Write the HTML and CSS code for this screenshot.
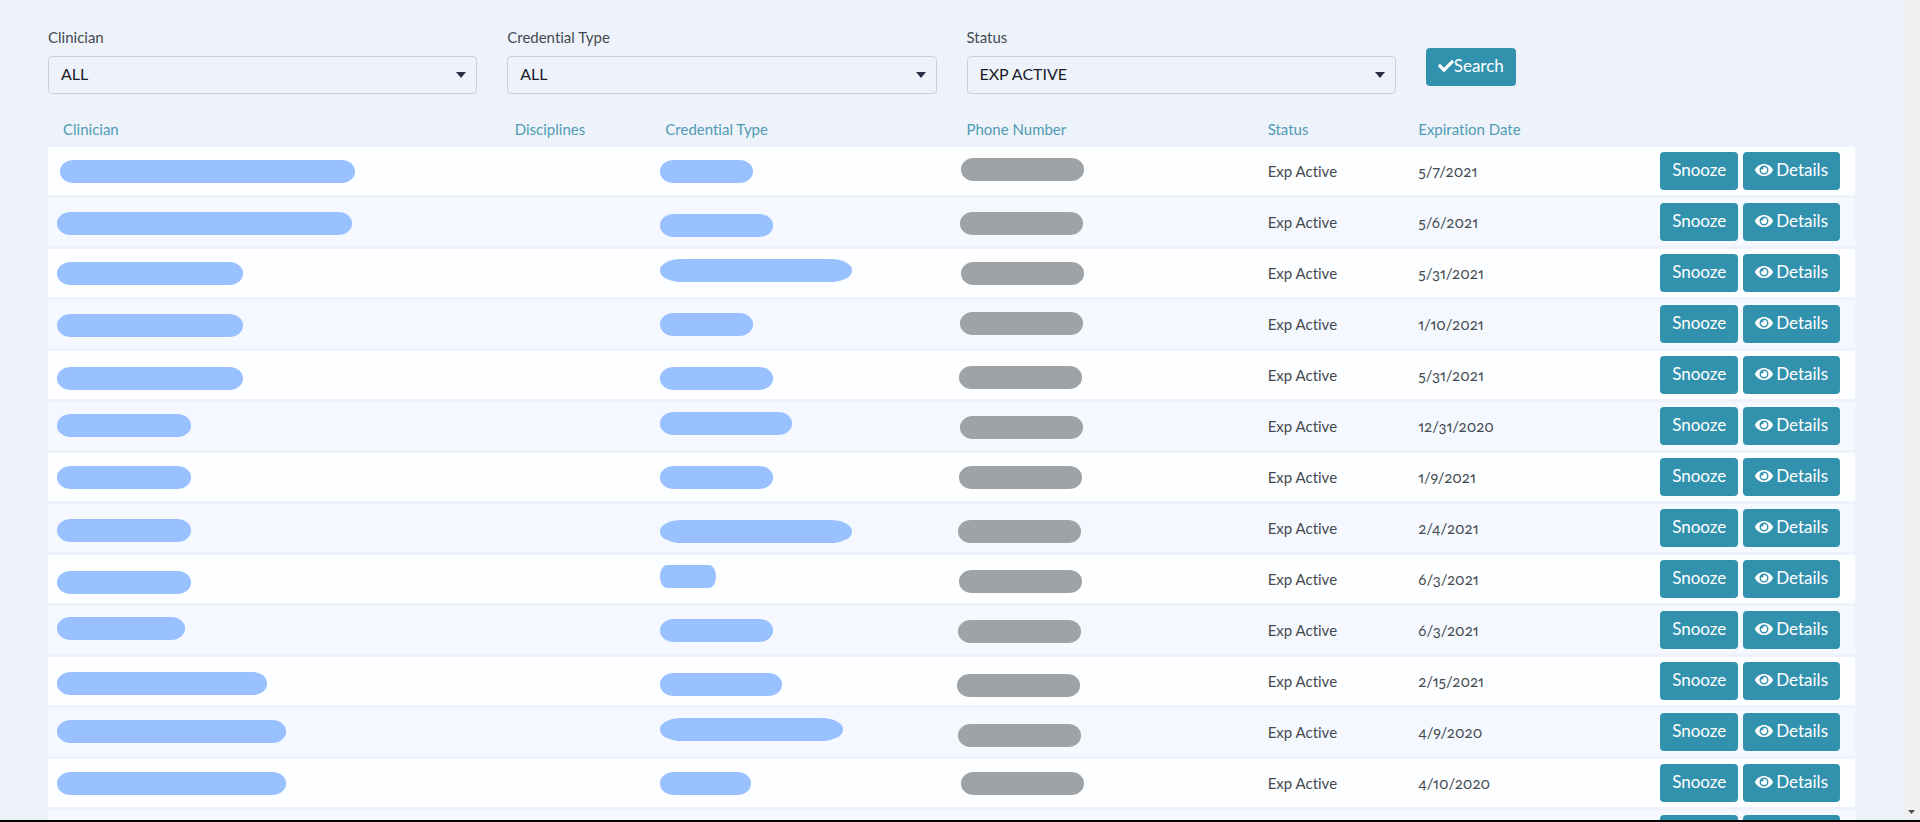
FILE: index.html
```html
<!DOCTYPE html>
<html lang="en">
<head>
<meta charset="utf-8">
<title>Credential Expirations</title>
<link rel="stylesheet" href="styles.css">
</head>
<body>
<svg width="0" height="0" class="sprite" aria-hidden="true">
  <symbol id="eye" viewBox="0 0 576 512"><path fill="currentColor" d="M572.52 241.4C518.29 135.59 410.93 64 288 64S57.68 135.64 3.48 241.41a32.35 32.35 0 0 0 0 29.19C57.71 376.41 165.07 448 288 448s230.32-71.64 284.52-177.41a32.35 32.35 0 0 0 0-29.19zM288 400a144 144 0 1 1 144-144 143.93 143.93 0 0 1-144 144zm0-240a95.31 95.31 0 0 0-25.31 3.79 47.85 47.85 0 0 1-66.9 66.9A95.78 95.78 0 1 0 288 160z"/></symbol>
  <symbol id="check" viewBox="0 0 512 512"><path fill="currentColor" d="M173.898 439.404l-166.4-166.4c-9.997-9.997-9.997-26.206 0-36.204l36.203-36.204c9.997-9.998 26.207-9.998 36.204 0L192 312.69 432.095 72.596c9.997-9.997 26.207-9.997 36.204 0l36.203 36.204c9.997 9.997 9.997 26.206 0 36.204l-294.4 294.401c-9.998 9.997-26.207 9.997-36.204-.001z"/></symbol>
</svg>
<div class="viewport">
  <main class="page">
    <form class="filters" onsubmit="return false">
      <div class="field">
        <label for="clinician">Clinician</label>
        <div class="select"><select id="clinician"><option>ALL</option></select></div>
      </div>
      <div class="field">
        <label for="type">Credential Type</label>
        <div class="select"><select id="type"><option>ALL</option></select></div>
      </div>
      <div class="field">
        <label for="status">Status</label>
        <div class="select"><select id="status"><option>EXP ACTIVE</option></select></div>
      </div>
      <div class="action"><button class="btn" type="submit"><svg class="check" aria-hidden="true"><use href="#check"/></svg>Search</button></div>
    </form>
    <table class="results">
      <colgroup><col class="c3"><col class="c1"><col class="c2"><col class="c2"><col class="c1"><col class="c1"><col class="c2"></colgroup>
      <thead><tr><th>Clinician</th><th>Disciplines</th><th>Credential Type</th><th>Phone Number</th><th>Status</th><th>Expiration Date</th><th></th></tr></thead>
      <tbody id="rows"></tbody>
    </table>
  </main>
  <div class="scrollbar" aria-hidden="true"><svg width="17" height="17"><path d="M5 7h7L8.500 11z" fill="#505050"/></svg></div>
</div>
<script src="rows.js"></script>
</body>
</html>
```
FILE: rows.js
```js
// date, then [x, y, width] of the mask in the clinician, credential and phone cells
const records = [
  ["5/7/2021",   [12, 13, 295], [10, 13, 93],  [10, 11, 123]],
  ["5/6/2021",   [9, 14, 295],  [10, 16, 113], [9, 14, 123]],
  ["5/31/2021",  [9, 13, 186],  [10, 10, 192], [10, 13, 123]],
  ["1/10/2021",  [9, 14, 186],  [10, 13, 93],  [9, 12, 123]],
  ["5/31/2021",  [9, 16, 186],  [10, 16, 113], [8, 15, 123]],
  ["12/31/2020", [9, 12, 134],  [10, 10, 132], [9, 14, 123]],
  ["1/9/2021",   [9, 13, 134],  [10, 13, 113], [8, 13, 123]],
  ["2/4/2021",   [9, 15, 134],  [10, 16, 192], [7, 16, 123]],
  ["6/3/2021",   [9, 16, 134],  [10, 10, 56],  [8, 15, 123]],
  ["6/3/2021",   [9, 11, 128],  [10, 13, 113], [7, 14, 123]],
  ["2/15/2021",  [9, 15, 210],  [10, 16, 122], [6, 17, 123]],
  ["4/9/2020",   [9, 12, 229],  [10, 10, 183], [7, 16, 123]],
  ["4/10/2020",  [9, 13, 229],  [10, 13, 91],  [10, 13, 123]],
  ["", null, null, null]
];
const mask = (m, kind) => {
  if (!m) return "<td></td>";
  const [x, y, w] = m;
  const rx = kind === "phone" ? 13 : w > 170 && kind === "type" ? 22 : w < 60 ? 7 : 14;
  return `<td class="masked"><svg class="mask ${kind}" aria-hidden="true"><rect x="${x}" y="${y}" width="${w}" height="23" rx="${rx}" ry="11"/></svg></td>`;
};
document.getElementById("rows").innerHTML = records.map(([date, who, type, phone]) => `<tr>
  ${mask(who, "who")}<td></td>${mask(type, "type")}${mask(phone, "phone")}
  <td>${date ? "Exp Active" : ""}</td><td class="date">${date}</td>
  <td class="actions"><div class="buttons"><button class="btn" type="button">Snooze</button><button class="btn" type="button"><svg class="eye" aria-hidden="true"><use href="#eye"/></svg>Details</button></div></td>
</tr>`).join("");
```
FILE: styles.css
```css
* { box-sizing: border-box; }
body {
  margin: 0;
  background: #eef3fb;
  color: #444a50;
  font: 15px/22px Lato, "Open Sans", sans-serif;
  font-variant-ligatures: none;
}
.sprite { position: absolute; }
.viewport {
  display: flex;
  height: 100vh;
  overflow: hidden;
  border-bottom: 2px solid #000;
}
.page {
  flex: 1;
  min-width: 0;
  padding: 26px 48px 0;
}
.scrollbar {
  display: flex;
  align-items: flex-end;
  width: 17px;
  background: #f0f0f0;
}
.filters {
  display: grid;
  grid-template-columns: repeat(4, 1fr);
  gap: 30px;
}
.field label { display: block; margin-bottom: 8px; }
.select { position: relative; }
.select::after {
  content: "";
  position: absolute;
  right: 11px;
  top: 16px;
  border: 5px solid transparent;
  border-top: 6px solid #2b2f48;
  border-bottom: 0;
  pointer-events: none;
}
select {
  display: block;
  width: 100%;
  height: 38px;
  padding: 0 12px 2px;
  border: 1px solid #cbd0dc;
  border-radius: 4px;
  background: transparent;
  color: #1c1c28;
  font: inherit;
  font-size: 16px;
  appearance: none;
}
.action { padding-top: 22px; }
.btn {
  display: inline-flex;
  align-items: center;
  height: 38px;
  padding: 0 12px 2px;
  border: 0;
  border-radius: 4px;
  background: #3292ae;
  color: #fff;
  font: inherit;
  font-size: 17px;
}
.check { width: 16px; height: 16px; }
.eye { width: 18px; height: 16px; margin-right: 3px; }
.results {
  width: 100%;
  margin-top: 17px;
  table-layout: fixed;
  border-spacing: 0 3px;
}
.c1 { width: 8.3333%; }
.c2 { width: 16.6667%; }
.c3 { width: 25%; }
th {
  height: 30px;
  padding: 0 15px;
  color: #4f9bb3;
  font-weight: 400;
  text-align: left;
  white-space: nowrap;
}
td {
  height: 48px;
  padding: 0 15px;
  background: #fcfeff;
  white-space: nowrap;
}
tbody tr:nth-child(even) td { background: #f5f9ff; }
td.masked { padding: 0; }
.mask { display: block; width: 100%; height: 48px; fill: #99c0ff; }
.mask.phone { fill: #9fa3a6; }
.date { font-variant-numeric: oldstyle-nums proportional-nums; }
.buttons { display: flex; justify-content: flex-end; gap: 5px; }
```
